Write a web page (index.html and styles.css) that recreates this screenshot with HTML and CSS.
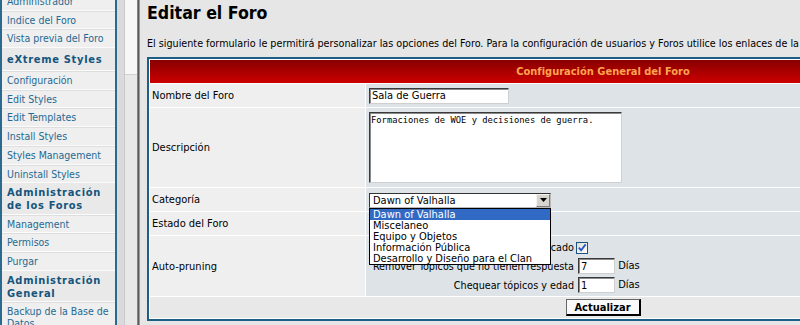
FILE: index.html
```html
<!DOCTYPE html>
<html lang="es">
<head>
<meta charset="utf-8">
<title>Editar el Foro</title>
<link rel="stylesheet" href="styles.css">
</head>
<body>
<div class="leftframe">
  <nav class="side">
    <a class="item">Administrador</a>
    <a class="item">Indice del Foro</a>
    <a class="item">Vista previa del Foro</a>
    <div class="hdr">eXtreme Styles</div>
    <a class="item">Configuración</a>
    <a class="item">Edit Styles</a>
    <a class="item">Edit Templates</a>
    <a class="item">Install Styles</a>
    <a class="item">Styles Management</a>
    <a class="item">Uninstall Styles</a>
    <div class="hdr two">Administración<br>de los Foros</div>
    <a class="item">Management</a>
    <a class="item">Permisos</a>
    <a class="item">Purgar</a>
    <div class="hdr two">Administración<br>General</div>
    <a class="item">Backup de la Base de<br>Datos</a>
  </nav>
  <div class="gap"></div>
  <div class="vscroll"><div class="thumb"></div><div class="track"></div></div>
</div>
<div class="divider"></div>
<main class="main">
  <h1>Editar el Foro</h1>
  <p class="intro">El siguiente formulario le permitirá personalizar las opciones del Foro. Para la configuración de usuarios y Foros utilice los enlaces de la izquierda.</p>
  <table class="forumline">
    <tr><th colspan="2">Configuración General del Foro</th></tr>
    <tr class="r-name">
      <td class="row1">Nombre del Foro</td>
      <td class="row2"><input class="post name" type="text" value="Sala de Guerra"></td>
    </tr>
    <tr class="r-desc">
      <td class="row1">Descripción</td>
      <td class="row2"><textarea class="post desc">Formaciones de WOE y decisiones de guerra.</textarea></td>
    </tr>
    <tr class="r-cat">
      <td class="row1">Categoría</td>
      <td class="row2">
        <div class="select wide">
          <span class="sel-text">Dawn of Valhalla</span>
          <span class="sel-btn"><svg width="7" height="4" viewBox="0 0 7 4"><path d="M0 0H7L3.5 4Z" fill="#000"/></svg></span>
          <ul class="dropdown">
            <li class="on">Dawn of Valhalla</li>
            <li>Miscelaneo</li>
            <li>Equipo y Objetos</li>
            <li>Información Pública</li>
            <li>Desarrollo y Diseño para el Clan</li>
          </ul>
        </div>
      </td>
    </tr>
    <tr class="r-state">
      <td class="row1">Estado del Foro</td>
      <td class="row2">
        <div class="select narrow">
          <span class="sel-text">Desbloqueado</span>
          <span class="sel-btn"><svg width="7" height="4" viewBox="0 0 7 4"><path d="M0 0H7L3.5 4Z" fill="#000"/></svg></span>
        </div>
      </td>
    </tr>
    <tr class="r-prune">
      <td class="row1">Auto-pruning</td>
      <td class="row2">
        <table class="prune">
          <tr>
            <td class="pl">Auto-pruning aplicado</td>
            <td class="pv"><span class="chk"><svg width="11" height="10" viewBox="0 0 11 10"><path d="M2 4.5L4.5 7.5L9.5 1" fill="none" stroke="#2a55c8" stroke-width="2"/></svg></span></td>
          </tr>
          <tr>
            <td class="pl">Remover Tópicos que no tienen respuesta</td>
            <td class="pv"><input class="post small" type="text" value="7"> Días</td>
          </tr>
          <tr>
            <td class="pl">Chequear tópicos y edad</td>
            <td class="pv"><input class="post small" type="text" value="1"> Días</td>
          </tr>
        </table>
      </td>
    </tr>
    <tr class="r-bottom">
      <td class="catBottom" colspan="2"><button class="btn" type="button">Actualizar</button></td>
    </tr>
  </table>
</main>
</body>
</html>
```
FILE: styles.css
```css
html, body {
  margin: 0;
  padding: 0;
  height: 325px;
  overflow: hidden;
}
body {
  display: flex;
  background: #e6e6e6;
  font-family: "DejaVu Sans Condensed", "DejaVu Sans", sans-serif;
  font-stretch: condensed;
  font-size: 11px;
  color: #000;
}

/* left frame */
.leftframe {
  width: 137px;
  flex: none;
  display: flex;
  align-items: flex-start;
  background: #dadada;
  height: 325px;
  overflow: hidden;
}
.side {
  width: 113px;
  flex: none;
  border-left: 2px solid #2b6a8f;
  border-right: 2px solid #2b6a8f;
  background: #efefef;
  margin-top: -8px;
  font-size: 10.5px;
}
.item {
  display: block;
  padding: 3px 2px 2.7px 5px;
  line-height: 12px;
  border-bottom: 1px solid #fbfbfb;
  box-shadow: 0 1px 0 #dedede inset;
  color: #1f6a92;
  text-decoration: none;
  white-space: nowrap;
}
.hdr {
  padding: 5px 2px 4px 5px;
  line-height: 13px;
  font-size: 11px;
  font-weight: bold;
  letter-spacing: 0.7px;
  color: #14557d;
  background: #e9e9e9;
  border-bottom: 1px solid #fbfbfb;
  white-space: nowrap;
}
.hdr.two {
  padding: 3px 2px 1.5px 5px;
}
.gap {
  width: 7px;
  flex: none;
}
.vscroll {
  width: 12px;
  flex: none;
  height: 325px;
  display: flex;
  flex-direction: column;
  border-left: 1px solid #c9c9c9;
}
.thumb {
  height: 74px;
  background: #f7f7f7;
  border-bottom: 1px solid #d0d0d0;
}
.track {
  flex: 1;
  background: #e8e8e8;
}
.divider {
  width: 3px;
  flex: none;
  background: linear-gradient(to right, #9a9a9a, #5a5a5a, #b8b8b8);
}

/* main frame */
.main {
  flex: none;
  width: 980px;
  padding: 2px 0 0 7px;
}
h1 {
  margin: 0;
  font-size: 17.6px;
  line-height: 22px;
  font-weight: bold;
}
.intro {
  margin: 13px 0 0;
  font-size: 10.7px;
  line-height: 13px;
  white-space: nowrap;
}
.forumline {
  width: 912px;
  margin-top: 7px;
  border: 2px solid #1d5e86;
  border-spacing: 1px;
  background: #ffffff;
}
.forumline th {
  height: 23px;
  padding: 0;
  background: linear-gradient(#880000, #cc0000);
  color: #ffa34f;
  font-size: 11px;
  font-weight: bold;
}
.forumline td {
  padding: 0 3px;
  vertical-align: middle;
}
.forumline td.row1 {
  width: 215px;
  box-sizing: border-box;
  padding-left: 2px;
  background: #efefef;
}
.row2 {
  background: #dee3e7;
}
.r-name td { height: 23px; }
.r-desc td { height: 79px; }
.r-cat td { height: 22px; }
.forumline .r-cat td.row2 { padding-top: 1px; }
.r-state td { height: 23px; }
.r-prune td.row1, .r-prune td.row2 { height: 60px; }
.r-bottom td { height: 21px; }

.post {
  box-sizing: border-box;
  margin: 0;
  font-family: "DejaVu Sans Condensed", "DejaVu Sans", sans-serif;
  font-stretch: condensed;
  font-size: 11px;
  color: #000;
  background: #fff;
  border: 1px solid;
  border-color: #3a3a3a #cfcfcf #cfcfcf #3a3a3a;
  box-shadow: inset 1px 1px 0 #8a8a8a;
  padding: 0 2px;
  outline: none;
  vertical-align: middle;
}
.post.name {
  width: 140px;
  height: 16px;
}
.post.desc {
  display: block;
  width: 253px;
  height: 71px;
  resize: none;
  padding: 1px 1px;
  font-family: "DejaVu Sans Mono", monospace;
  font-size: 8.8px;
  line-height: 12px;
}
.post.small {
  width: 37px;
  height: 16px;
  margin-left: 2px;
}

/* select look-alike */
.select {
  position: relative;
  box-sizing: border-box;
  display: flex;
  align-items: center;
  height: 15px;
  border: 1px solid;
  border-color: #333 #b9b9b9 #b9b9b9 #333;
  background: #fff;
  font-size: 11px;
  line-height: 13px;
}
.select.wide { width: 182px; }
.select.narrow { width: 92px; }
.sel-text {
  flex: 1;
  padding-left: 3px;
  white-space: nowrap;
}
.sel-btn {
  flex: none;
  box-sizing: border-box;
  width: 14px;
  height: 13px;
  display: flex;
  align-items: center;
  justify-content: center;
  background: #d8d5cf;
  border: 1px solid;
  border-color: #f4f4f4 #7d7d7d #7d7d7d #f4f4f4;
}
.dropdown {
  position: absolute;
  top: 14px;
  left: -1px;
  width: 182px;
  box-sizing: border-box;
  margin: 0;
  padding: 0;
  list-style: none;
  background: #fff;
  border: 1px solid #000;
  z-index: 5;
}
.dropdown li {
  padding-left: 3px;
  line-height: 11px;
  height: 11px;
  white-space: nowrap;
}
.dropdown li.on {
  background: #316ac5;
  color: #fff;
}

/* auto-pruning */
.prune {
  border-spacing: 0;
}
.forumline .prune td {
  padding: 1px;
  height: 17px;
}
.forumline .prune td.pl {
  width: 204px;
  text-align: right;
  white-space: nowrap;
  font-size: 10.7px;
}
.pv {
  white-space: nowrap;
}
.chk {
  display: inline-flex;
  align-items: center;
  justify-content: center;
  box-sizing: border-box;
  width: 12px;
  height: 12px;
  margin: 2px 0 0 0;
  border: 1px solid #1c5180;
  background: linear-gradient(135deg, #dcdcd7, #ffffff);
  vertical-align: middle;
}

/* bottom */
.forumline td.catBottom {
  background: #e8e8e8;
  text-align: center;
  padding: 0;
}
.btn {
  box-sizing: border-box;
  width: 75px;
  height: 17px;
  padding: 0;
  font-family: "DejaVu Sans Condensed", "DejaVu Sans", sans-serif;
  font-stretch: condensed;
  font-size: 11px;
  font-weight: bold;
  color: #000;
  background: #fafafa;
  border-style: solid;
  border-width: 1px 2px 2px 1px;
  border-color: #666 #000 #000 #666;
  vertical-align: middle;
}
```
